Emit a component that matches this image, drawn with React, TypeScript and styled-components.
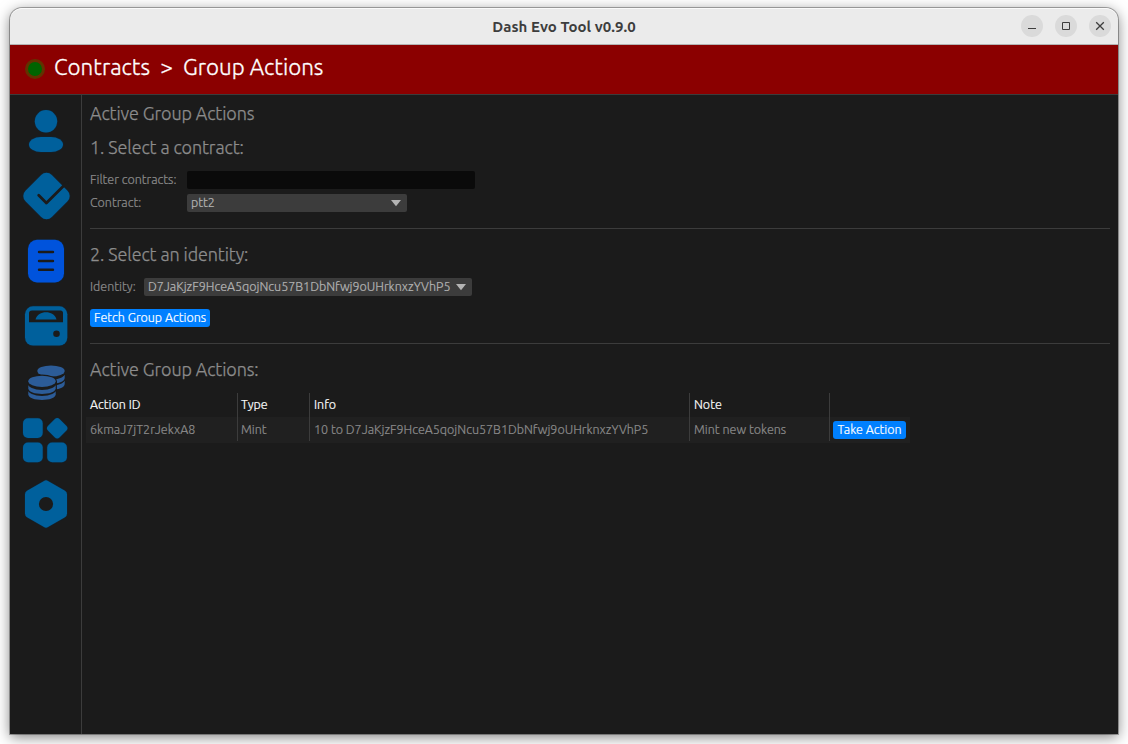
import React from 'react';
import styled, { createGlobalStyle } from 'styled-components';

const Global = createGlobalStyle`
  * { box-sizing: border-box; }
  body { margin: 0; background: #fff; font-family: Ubuntu, "Noto Sans", sans-serif; overflow: hidden; }
`;

const Desktop = styled.div`
  width: 1128px;
  height: 744px;
  padding: 8px 10px 10px;
`;

const Window = styled.div`
  display: flex;
  flex-direction: column;
  width: 1108px;
  height: 726px;
  border-radius: 12px 12px 0 0;
  background: #1b1b1b;
  box-shadow: 0 0 0 1px rgba(0, 0, 0, 0.3), 0 3px 14px rgba(0, 0, 0, 0.5);
`;

const TitleBar = styled.header`
  display: grid;
  grid-template-columns: 1fr auto 1fr;
  align-items: center;
  height: 37px;
  flex: none;
  padding: 0 7px;
  border-radius: 12px 12px 0 0;
  background: #ebebeb;
  border-bottom: 1px solid #b4b4b4;
  box-shadow: inset 0 1px 0 #fafafa;
`;

const WindowTitle = styled.h1`
  grid-column: 2;
  margin: 2px 0 0;
  font-size: 15px;
  font-weight: 700;
  line-height: 20px;
  letter-spacing: 0.03px;
  color: #3d3d3d;
`;

const WindowButtons = styled.div`
  display: flex;
  justify-content: flex-end;
  gap: 12px;
`;

const WindowButton = styled.button`
  width: 22px;
  height: 22px;
  padding: 0;
  border: 0;
  border-radius: 50%;
  background: #dadada;

  svg { display: block; }
`;

const Breadcrumbs = styled.div`
  display: flex;
  align-items: center;
  flex: none;
  height: 50px;
  padding: 0 0 6px 15px;
  background: #8b0000;
  border-bottom: 1px solid #3c3c3c;
`;

const StatusDot = styled.span`
  width: 20px;
  height: 20px;
  margin: 5px 9px 0 0;
  border: 3px solid #633200;
  border-radius: 50%;
  background: #006400;
`;

const Crumb = styled.span`
  font-size: 22.4px;
  font-weight: 300;
  line-height: 30px;
  color: #fff;
  -webkit-text-stroke: 0.3px;
`;

const CrumbArrow = styled(Crumb)`
  width: 33px;
  text-align: center;
`;

const Body = styled.div`
  display: flex;
  flex: 1;
`;

const Sidebar = styled.nav`
  display: flex;
  flex-direction: column;
  width: 72px;
  padding: 4px 0 0 11px;
  border-right: 1px solid #3c3c3c;
`;

const NavIcon = styled.svg<{ $tone?: string }>`
  display: block;
  width: 50px;
  height: ${p => p.height}px;
  flex: none;
  fill: ${p => p.$tone ?? '#00609c'};
`;

const Content = styled.main`
  flex: 1;
  padding: 7px 8px 0;
  color: #8c8c8c;
`;

const Heading = styled.h2`
  margin: 0;
  padding-bottom: 2px;
  font-size: 18px;
  font-weight: 300;
  line-height: 22px;
  letter-spacing: -0.1px;
  -webkit-text-stroke: 0.25px;

  & + & { margin-top: 10px; }
`;

const Text = styled.span`
  display: block;
  padding-bottom: 2px;
  font-size: 12.5px;
  font-weight: 300;
  line-height: 16px;
  white-space: nowrap;
  -webkit-text-stroke: 0.2px;
`;

const Form = styled.div`
  display: grid;
  grid-template-columns: 97px max-content;
  row-gap: 5px;
  margin-top: 11px;
`;

const FilterInput = styled.input`
  width: 288px;
  height: 18px;
  padding: 0 4px;
  border: 0;
  border-radius: 2px;
  background: #0a0a0a;
  color: #b4b4b4;
`;

const Select = styled.button<{ $width: number }>`
  display: flex;
  align-items: center;
  justify-content: space-between;
  width: ${p => p.$width}px;
  height: 18px;
  padding: 0 5px 0 4px;
  border: 0;
  border-radius: 2px;
  background: #3c3c3c;
  color: #b4b4b4;
  font-family: inherit;
`;

const Separator = styled.hr`
  height: 1px;
  margin: 16px 0 14px;
  border: 0;
  background: #3c3c3c;
`;

const IdentityRow = styled.div`
  display: flex;
  align-items: center;
  margin-top: 11px;
`;

const IdentityLabel = styled(Text)`
  width: 54px;
`;

const ActionButton = styled.button<{ $width: number }>`
  display: block;
  width: ${p => p.$width}px;
  height: 18px;
  padding: 0;
  border: 0;
  border-radius: 3px;
  background: #0080ff;
  color: #fff;
  font-family: inherit;
`;

const FetchRow = styled.div`
  margin-top: 13px;
`;

const Table = styled.div`
  width: 824px;
  margin: 11px 0 0 -4px;
`;

const Cell = styled.div`
  display: flex;
  align-items: center;
  height: 24px;
  padding-left: 4px;
  border-right: 1px solid #3c3c3c;

  &:last-child { border-right: 0; padding-left: 3px; }
  &:nth-child(2) { padding-left: 3px; }
`;

const TableRow = styled.div<{ $striped?: boolean }>`
  display: grid;
  grid-template-columns: 152px 72px 380px 140px 1fr;
  height: ${p => (p.$striped ? 26 : 24)}px;
  background: ${p => (p.$striped ? '#202020' : 'transparent')};
  color: ${p => (p.$striped ? '#8c8c8c' : '#ffffff')};

  ${Cell} { padding-top: ${p => (p.$striped ? 2 : 0)}px; }
`;

const Chevron = () => (
  <svg width="12" height="8" viewBox="0 0 12 8">
    <path d="M1 1H11L6 7.2Z" fill="#b4b4b4" />
  </svg>
);

const halo = { stroke: '#15222d', strokeWidth: 1.4, paintOrder: 'stroke' } as const;

const Coin = ({ x, y, layers }: { x: number; y: number; layers: number }) => (
  <g transform={`translate(${x} ${y})`}>
    {Array.from({ length: layers }, (_, i) => layers - i).map(n => (
      <g key={n} transform={`translate(0 ${n * 6})`}>
        <path d="M-13.7 -2V1C-13.7 8.6 13.7 8.6 13.7 1V-2Z" />
        <ellipse cy="-4.4" rx="14.4" ry="7.2" fill="#1b1b1b" />
      </g>
    ))}
    <ellipse rx="13.7" ry="5.6" />
  </g>
);

export default function App() {
  return (
    <>
      <Global />
      <Desktop>
        <Window>
          <TitleBar>
            <WindowTitle>Dash Evo Tool v0.9.0</WindowTitle>
            <WindowButtons>
              <WindowButton aria-label="Minimize">
                <svg width="22" height="22"><path d="M7 13.5H15" stroke="#3d3d3d" /></svg>
              </WindowButton>
              <WindowButton aria-label="Maximize">
                <svg width="22" height="22"><path d="M7.5 7.5H14.5V14.5H7.5Z" fill="none" stroke="#3d3d3d" /></svg>
              </WindowButton>
              <WindowButton aria-label="Close">
                <svg width="22" height="22"><path d="M7.2 7.2L14.8 14.8M14.8 7.2L7.2 14.8" stroke="#3d3d3d" strokeWidth="1.3" /></svg>
              </WindowButton>
            </WindowButtons>
          </TitleBar>

          <Breadcrumbs>
            <StatusDot />
            <Crumb>Contracts</Crumb>
            <CrumbArrow>&gt;</CrumbArrow>
            <Crumb>Group Actions</Crumb>
          </Breadcrumbs>

          <Body>
            <Sidebar>
              <NavIcon height="64" viewBox="-25 -32 50 64">
                <g {...halo}>
                  <circle cy="-9.7" r="11.2" />
                  <rect x="-17" y="6" width="34" height="15" rx="12" ry="7.5" />
                </g>
              </NavIcon>
              <NavIcon height="66" viewBox="-25 -33 50 66">
                <rect x="-18.6" y="-18.6" width="37.2" height="37.2" rx="7.5" transform="translate(.5 0) rotate(45)" {...halo} />
                <path d="M-7.3 -.8L.4 7L21 -13.6" fill="none" stroke="#1b1b1b" strokeWidth="2.8" strokeLinecap="round" strokeLinejoin="round" />
              </NavIcon>
              <NavIcon height="64" viewBox="-25 -32 50 64" $tone="#0053dc">
                <rect x="-18" y="-21.2" width="36" height="42.6" rx="9" {...halo} />
                <path d="M-7 -9H7M-7 0H7M-7 8.7H7" stroke="#1b1b1b" strokeWidth="2.4" strokeLinecap="round" />
              </NavIcon>
              <NavIcon height="66" viewBox="-25 -33 50 66">
                <rect x="-21" y="-19.7" width="42.3" height="39.3" rx="8" {...halo} />
                <path d="M-14 -15.5H14.5Q17 -15.5 17 -13V-3.7H-17V-13Q-17 -15.5 -14 -15.5Z" fill="#1b1b1b" />
                <path d="M-10.5 -6.5C-8 -16.2 8 -16.2 10.5 -6.5Z" />
                <circle cx="10.5" cy="7.7" r="3.3" fill="#1b1b1b" />
              </NavIcon>
              <NavIcon height="48" viewBox="-25 -24 50 48" $tone="#2c5c98">
                <Coin x={5} y={-12} layers={2} />
                <ellipse cx="-4" cy="-1.7" rx="14.9" ry="6.8" fill="#1b1b1b" />
                <path d="M-19 -1.7H10.9V13H-19Z" fill="#1b1b1b" />
                <Coin x={-4} y={-1.7} layers={2} />
              </NavIcon>
              <NavIcon height="66" viewBox="-25 -33 50 66">
                <g {...halo}>
                  <rect x="-23" y="-21.7" width="19.7" height="19.7" rx="5" />
                  <rect x="-8.2" y="-8.2" width="16.4" height="16.4" rx="3.6" transform="translate(11.2 -11.7) rotate(45)" />
                  <rect x="-23" y="2.5" width="19.7" height="19.7" rx="5" />
                  <rect x="1.2" y="2.5" width="19.7" height="19.7" rx="5" />
                </g>
              </NavIcon>
              <NavIcon height="62" viewBox="-25 -31 50 62">
                <path d="M-2 -23Q0 -24.4 2 -23L19 -13.2Q21 -12 21 -9.6V9.6Q21 12 19 13.2L2 23Q0 24.4 -2 23L-19 13.2Q-21 12 -21 9.6V-9.6Q-21 -12 -19 -13.2Z" {...halo} />
                <circle r="7.1" fill="#1b1b1b" />
              </NavIcon>
            </Sidebar>

            <Content>
              <Heading>Active Group Actions</Heading>
              <Heading>1. Select a contract:</Heading>
              <Form>
                <Text>Filter contracts:</Text>
                <FilterInput aria-label="Filter contracts" />
                <Text>Contract:</Text>
                <Select $width={220}>
                  <Text>ptt2</Text>
                  <Chevron />
                </Select>
              </Form>
              <Separator />

              <Heading>2. Select an identity:</Heading>
              <IdentityRow>
                <IdentityLabel>Identity:</IdentityLabel>
                <Select $width={328}>
                  <Text>D7JaKjzF9HceA5qojNcu57B1DbNfwj9oUHrknxzYVhP5</Text>
                  <Chevron />
                </Select>
              </IdentityRow>
              <FetchRow>
                <ActionButton $width={120}>
                  <Text>Fetch Group Actions</Text>
                </ActionButton>
              </FetchRow>
              <Separator />

              <Heading>Active Group Actions:</Heading>
              <Table>
                <TableRow>
                  <Cell><Text>Action ID</Text></Cell>
                  <Cell><Text>Type</Text></Cell>
                  <Cell><Text>Info</Text></Cell>
                  <Cell><Text>Note</Text></Cell>
                  <Cell />
                </TableRow>
                <TableRow $striped>
                  <Cell><Text>6kmaJ7jT2rJekxA8</Text></Cell>
                  <Cell><Text>Mint</Text></Cell>
                  <Cell><Text>10 to D7JaKjzF9HceA5qojNcu57B1DbNfwj9oUHrknxzYVhP5</Text></Cell>
                  <Cell><Text>Mint new tokens</Text></Cell>
                  <Cell>
                    <ActionButton $width={73}><Text>Take Action</Text></ActionButton>
                  </Cell>
                </TableRow>
              </Table>
            </Content>
          </Body>
        </Window>
      </Desktop>
    </>
  );
}
